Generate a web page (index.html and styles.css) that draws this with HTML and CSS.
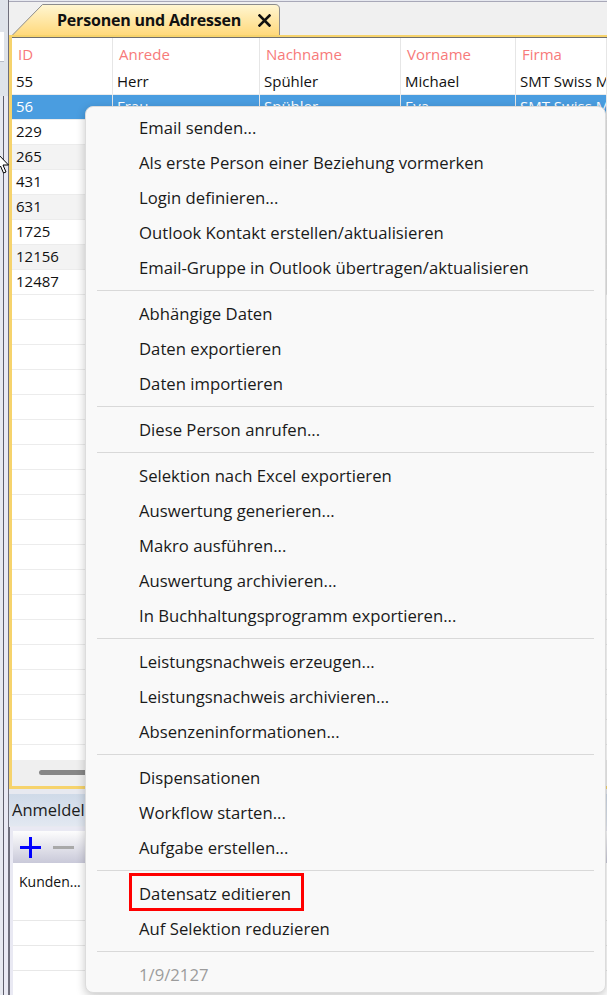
FILE: index.html
```html
<!DOCTYPE html>
<html lang="de">
<head>
    <meta charset="UTF-8">
    <title>Personen und Adressen</title>
    <link rel="stylesheet" href="styles.css">
</head>
<body>

    <div class="app">
        <!-- Left docked panel edge -->
        <div class="side">
            <div class="side-top"><div class="side-box"></div></div>
            <div class="side-bottom"></div>
        </div>

        <div class="main">
            <!-- Document tabs -->
            <div class="tabbar">
                <div class="tab">
                    <svg class="tab-bg" width="268" height="31" viewBox="0 0 268 31">
                        <defs>
                            <linearGradient id="tabFill" x1="0" y1="0" x2="0" y2="1">
                                <stop offset="0" stop-color="#fff6d2"/>
                                <stop offset="1" stop-color="#ffd97c"/>
                            </linearGradient>
                        </defs>
                        <path d="M0.5 31 L30.5 0.5 L263 0.5 Q267.5 0.5 267.5 5 L267.5 31" fill="url(#tabFill)" stroke="#8c8c8c"/>
                    </svg>
                    <span class="tab-title">Personen und Adressen</span>
                    <svg class="tab-close" width="13" height="13" viewBox="0 0 13 13">
                        <path d="M1.5 1.5 L11.5 11.5 M11.5 1.5 L1.5 11.5" stroke="#111" stroke-width="2.6" stroke-linecap="square"/>
                    </svg>
                </div>
            </div>

            <!-- Persons grid -->
            <div class="frame">
                <div class="grid">
                    <div class="row head">
                        <div>ID</div><div>Anrede</div><div>Nachname</div><div>Vorname</div><div>Firma</div>
                    </div>
                    <div class="row"><div>55</div><div>Herr</div><div>Spühler</div><div>Michael</div><div>SMT Swiss M</div></div>
                    <div class="row selected"><div>56</div><div>Frau</div><div>Spühler</div><div>Eva</div><div>SMT Swiss M</div></div>
                    <div class="row"><div>229</div><div></div><div></div><div></div><div></div></div>
                    <div class="row"><div>265</div><div></div><div></div><div></div><div></div></div>
                    <div class="row"><div>431</div><div></div><div></div><div></div><div></div></div>
                    <div class="row"><div>631</div><div></div><div></div><div></div><div></div></div>
                    <div class="row"><div>1725</div><div></div><div></div><div></div><div></div></div>
                    <div class="row"><div>12156</div><div></div><div></div><div></div><div></div></div>
                    <div class="row"><div>12487</div><div></div><div></div><div></div><div></div></div>
                    <div class="empty-rows"></div>
                    <div class="hscroll"><div class="thumb"></div></div>
                </div>
            </div>

            <!-- Registrations panel -->
            <div class="panel-title">Anmeldelisten</div>
            <div class="subpanel">
                <div class="toolbar">
                    <svg width="21" height="21" viewBox="0 0 21 21"><path d="M10.5 0 V21 M0 10.5 H21" stroke="#0000ff" stroke-width="3"/></svg>
                    <svg width="21" height="21" viewBox="0 0 21 21"><path d="M0 10.5 H21" stroke="#a9a9a9" stroke-width="3"/></svg>
                </div>
                <div class="list">
                    <div class="list-row first">Kunden...</div>
                    <div class="list-row"></div>
                    <div class="list-row"></div>
                    <div class="list-row"></div>
                </div>
            </div>
        </div>
    </div>

    <!-- Mouse pointer -->
    <svg class="cursor" width="14" height="24" viewBox="0 0 14 24">
        <path d="M0.5 0.5 L0.5 18 L4.5 14 L7.5 21 L10 20 L7 13 L12.5 13 Z" fill="#fff" stroke="#000"/>
    </svg>

    <!-- Row context menu -->
    <div class="menu">
        <div class="item">Email senden...</div>
        <div class="item">Als erste Person einer Beziehung vormerken</div>
        <div class="item">Login definieren...</div>
        <div class="item">Outlook Kontakt erstellen/aktualisieren</div>
        <div class="item">Email-Gruppe in Outlook übertragen/aktualisieren</div>
        <div class="sep"></div>
        <div class="item">Abhängige Daten</div>
        <div class="item">Daten exportieren</div>
        <div class="item">Daten importieren</div>
        <div class="sep"></div>
        <div class="item">Diese Person anrufen...</div>
        <div class="sep"></div>
        <div class="item">Selektion nach Excel exportieren</div>
        <div class="item">Auswertung generieren...</div>
        <div class="item">Makro ausführen...</div>
        <div class="item">Auswertung archivieren...</div>
        <div class="item">In Buchhaltungsprogramm exportieren...</div>
        <div class="sep"></div>
        <div class="item">Leistungsnachweis erzeugen...</div>
        <div class="item">Leistungsnachweis archivieren...</div>
        <div class="item">Absenzeninformationen...</div>
        <div class="sep"></div>
        <div class="item">Dispensationen</div>
        <div class="item">Workflow starten...</div>
        <div class="item">Aufgabe erstellen...</div>
        <div class="sep"></div>
        <div class="item"><span class="marked">Datensatz editieren</span></div>
        <div class="item">Auf Selektion reduzieren</div>
        <div class="sep"></div>
        <div class="item disabled">1/9/2127</div>
    </div>

</body>
</html>
```

FILE: styles.css
```css
/* Page */
* {
    box-sizing: border-box;
}

body {
    margin: 0;
    width: 607px;
    height: 995px;
    overflow: hidden;
    position: relative;
    background: #e7e9f0;
    font-family: "Open Sans", "Noto Sans", sans-serif;
    color: #111;
}

.app {
    display: flex;
    height: 995px;
}

/* Left docked panel edge */
.side {
    width: 9px;
    flex: none;
    display: flex;
    flex-direction: column;
    border-right: 1px solid #6f6f7c;
}

.side-top {
    height: 96px;
    background: #dfe3ea;
    padding-top: 32px;
}

.side-box {
    width: 4px;
    height: 30px;
    background: #fff;
    border-bottom: 1px solid #b8bcc8;
}

.side-bottom {
    flex: 1;
    border-left: 1px solid #5f5f6c;
    margin-left: 3px;
    background: #e9e9f3;
}

.main {
    flex: 1;
    display: flex;
    flex-direction: column;
    min-width: 0;
    overflow: hidden;
}

/* Document tabs */
.tabbar {
    flex: none;
    height: 34px;
    margin-top: 1px;
    border-top: 1px solid #a8a8b8;
    background: #f0f0f0;
    padding: 2px 0 0 3px;
}

.tab {
    position: relative;
    width: 268px;
    height: 31px;
    display: flex;
    align-items: center;
    padding-left: 45px;
}

.tab-bg {
    position: absolute;
    left: 0;
    top: 0;
}

.tab-title {
    position: relative;
    font-size: 16px;
    font-weight: bold;
    letter-spacing: -0.2px;
}

.tab-close {
    position: relative;
    margin-left: 17px;
    margin-top: 1px;
}

/* Persons grid */
.frame {
    flex: none;
    height: 754px;
    border: 3px solid #f6d36c;
    border-top-width: 2px;
    border-right: none;
}

.grid {
    height: 100%;
    display: flex;
    flex-direction: column;
    background: #fff;
    border-top: 1px solid #6e6e6e;
}

.row {
    display: grid;
    grid-template-columns: 101px 147px 141px 115px 1fr;
    height: 25px;
    font-size: 15px;
    line-height: 23px;
    border-bottom: 1px solid #ececec;
    flex: none;
}

.row > div {
    padding-left: 4px;
    border-right: 1px solid #e6e6e6;
    white-space: nowrap;
    overflow: hidden;
}

.row:nth-child(odd) {
    background: #f3f3f3;
}

.row.head {
    height: 32px;
    line-height: 32px;
    background: #fff;
    color: #f77a7a;
    border-bottom: none;
}

.row.head > div {
    padding-left: 6px;
}

.row.selected {
    background: #4a9de0;
    color: #fff;
}

.empty-rows {
    flex: 1;
    background: repeating-linear-gradient(to bottom, #fff 0, #fff 24px, #ececec 24px, #ececec 25px);
}

.hscroll {
    height: 26px;
    flex: none;
    background: #efefef;
    padding: 10px 0 0 27px;
}

.thumb {
    width: 70px;
    height: 5px;
    border-radius: 3px;
    background: #878787;
}

/* Registrations panel */
.panel-title {
    flex: none;
    margin-top: 5px;
    height: 32px;
    line-height: 32px;
    padding-left: 3px;
    font-size: 16.5px;
    color: #1c1c1c;
    white-space: nowrap;
    background: linear-gradient(#cfdae8, #e2e8f1);
}

.subpanel {
    flex: 1;
    min-height: 0;
    margin-top: 1px;
    padding: 4px 0 0 3px;
    border-left: 1px solid #6f6f7c;
    background: #e9e9f3;
}

.toolbar {
    height: 32px;
    display: flex;
    align-items: center;
    gap: 12px;
    padding-left: 7px;
    background: linear-gradient(#fdfdfd, #c9c9d9);
}

.list {
    background: #fff;
    height: 140px;
}

.list-row {
    height: 25px;
    border-bottom: 1px solid #e8e8e8;
    font-size: 14px;
    padding-left: 6px;
}

.list-row.first {
    height: 58px;
    padding-top: 9px;
}

/* Mouse pointer */
.cursor {
    position: absolute;
    left: -4px;
    top: 152px;
}

/* Row context menu */
.menu {
    position: absolute;
    left: 85px;
    top: 106px;
    width: 521px;
    padding: 3px 0 0;
    background: #f9f9f9;
    border: 1px solid #dcdcdc;
    border-radius: 8px;
    box-shadow: 0 3px 10px rgba(0, 0, 0, 0.22);
    font-size: 16.7px;
    color: #1a1a1a;
}

.item {
    height: 35px;
    line-height: 35px;
    padding-left: 53px;
    white-space: nowrap;
}

.item.disabled {
    color: #9c9c9c;
}

.sep {
    height: 11px;
    margin: 0 11px;
    background: linear-gradient(transparent 5px, #d9d9d9 5px, #d9d9d9 6px, transparent 6px);
}

/* Red marker round one entry */
.marked {
    position: relative;
}

.marked::after {
    content: "";
    position: absolute;
    left: -10px;
    right: -13px;
    top: -9px;
    bottom: -6px;
    border: 3px solid #ff0000;
}
```
